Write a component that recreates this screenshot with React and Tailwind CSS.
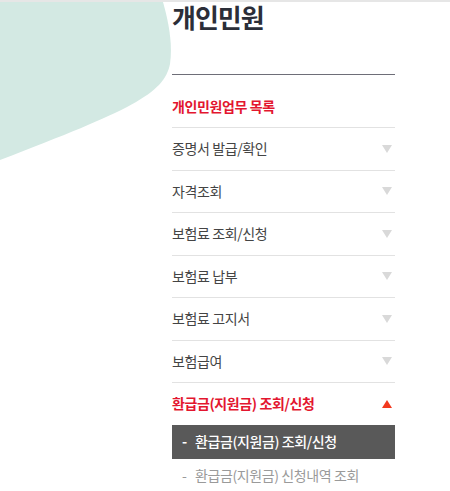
import React from 'react';

const menu = ['증명서 발급/확인', '자격조회', '보험료 조회/신청', '보험료 납부', '보험료 고지서', '보험급여'];

function Caret({ up }) {
  return up ? (
    <svg width="10" height="8" viewBox="0 0 10 8" className="mr-[3px]">
      <path d="M5 0 L10 8 L0 8 Z" fill="#f2391f" />
    </svg>
  ) : (
    <svg width="10" height="8" viewBox="0 0 10 8" className="mr-[3px]">
      <path d="M0 0 L10 0 L5 8 Z" fill="#d9d9d9" />
    </svg>
  );
}

export default function App() {
  return (
    <div
      className="relative w-[450px] h-[491px] overflow-hidden bg-white"
      style={{ fontFamily: '"Noto Sans CJK KR", "Noto Sans", sans-serif' }}
    >
      <div className="h-[2px] bg-[#e6e6e6]" />

      {/* decorative blob */}
      <svg className="absolute left-0 top-[2px]" width="171" height="165" viewBox="0 0 171 165">
        <path d="M0 0 L163 0 C168 18 173 40 170 62 C164 92 130 108 0 158 Z" fill="#d3e9e3" />
      </svg>

      <div className="relative ml-[172px] w-[223px]">
        <h1 className="text-[26px] leading-[30px] font-bold tracking-[-1px] text-[#2b2e38]">개인민원</h1>
        <div className="mt-[42px] h-[1px] bg-[#6e6e78]" />

        <div className="pt-[21px] pb-[11px] border-b border-[#e2e2e2] text-[14px] leading-[20px] font-bold tracking-[-0.4px] text-[#e3162f]">
          개인민원업무 목록
        </div>

        {menu.map((m) => (
          <div
            key={m}
            className="flex h-[42.5px] items-center justify-between border-b border-[#e2e2e2] text-[14px] tracking-[-0.4px] text-[#444]"
          >
            <span>{m}</span>
            <Caret />
          </div>
        ))}

        <div className="flex h-[41.5px] items-center justify-between text-[14px] font-bold tracking-[-0.4px] text-[#e3162f]">
          <span>환급금(지원금) 조회/신청</span>
          <Caret up />
        </div>

        <div className="flex h-[34px] items-center bg-[#595959] text-[14px] tracking-[-0.4px] text-white font-medium">
          <span className="ml-[10px] w-[13px] font-bold">-</span>
          <span>환급금(지원금) 조회/신청</span>
        </div>
        <div className="flex h-[33px] items-center text-[14px] tracking-[-0.4px] text-[#9a9a9a]">
          <span className="ml-[10px] w-[13px]">-</span>
          <span>환급금(지원금) 신청내역 조회</span>
        </div>
      </div>
    </div>
  );
}
